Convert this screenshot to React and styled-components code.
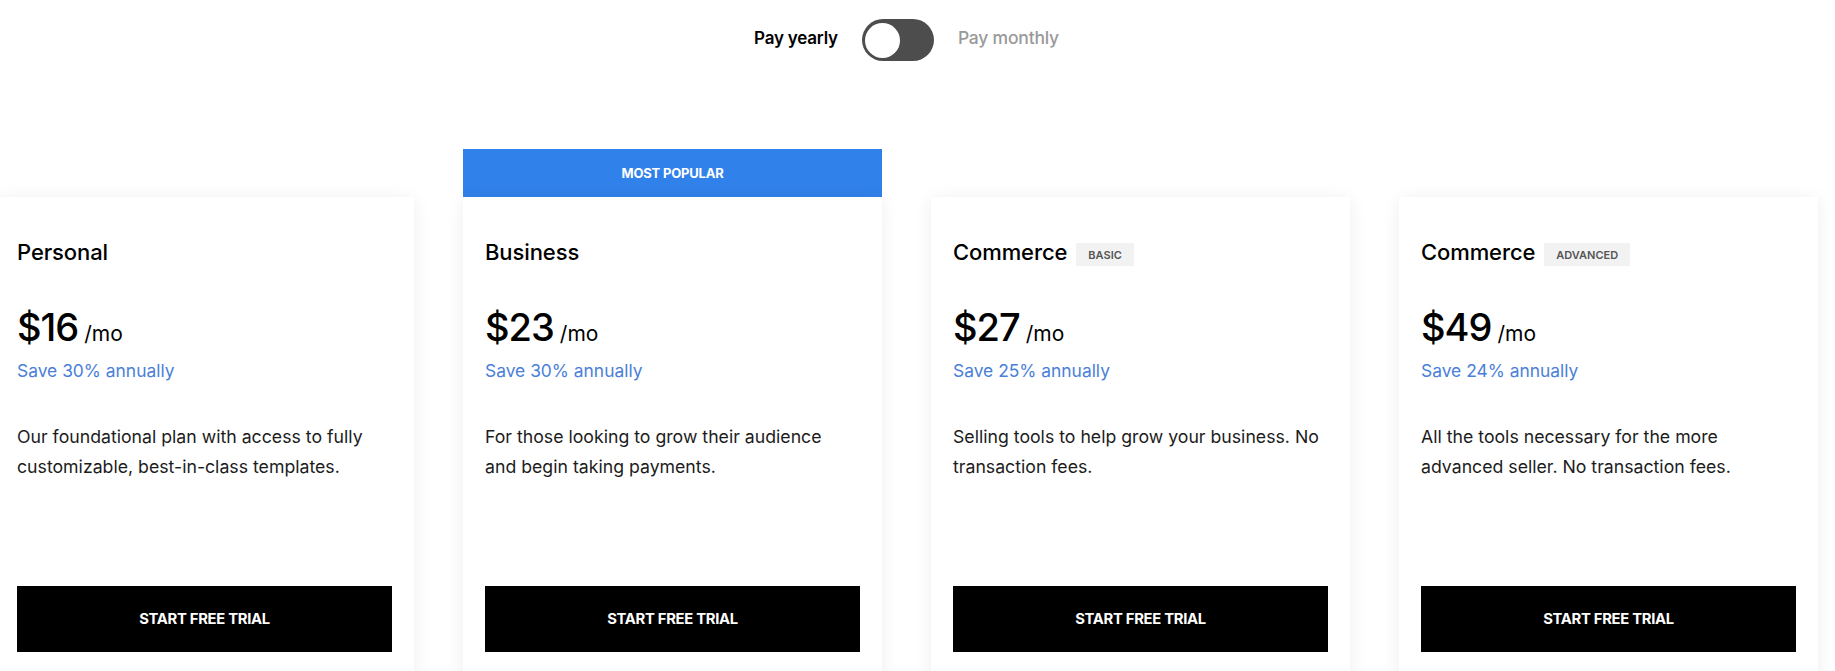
import React, { useState } from 'react';
import styled, { createGlobalStyle } from 'styled-components';

const GlobalStyle = createGlobalStyle`
  html, body {
    margin: 0;
    padding: 0;
    overflow: hidden;
    background: #fff;
  }
  body {
    font-family: Inter, "Liberation Sans", Arial, sans-serif;
    color: #000;
  }
  * { box-sizing: border-box; }
`;

const Page = styled.div`
  padding-top: 19px;
`;

const BillingSwitch = styled.div`
  display: flex;
  align-items: center;
  justify-content: center;
  gap: 24px;
  padding-right: 22px;
  height: 42px;
`;

const SwitchLabel = styled.span`
  font-size: ${p => (p.$active ? '17px' : '17.5px')};
  font-weight: ${p => (p.$active ? 600 : 500)};
  color: ${p => (p.$active ? '#000' : '#999')};
  cursor: pointer;
  letter-spacing: -0.2px;
  padding-bottom: 5px;
`;

const Track = styled.button`
  position: relative;
  width: 72px;
  height: 42px;
  border: none;
  border-radius: 21px;
  background: #4d4d4d;
  padding: 0;
  cursor: pointer;
`;

const Knob = styled.span`
  position: absolute;
  top: 3.5px;
  left: ${p => (p.$right ? '33.5px' : '3.5px')};
  width: 35px;
  height: 35px;
  border-radius: 50%;
  background: #fff;
  transition: left 0.2s;
`;

const Plans = styled.div`
  display: flex;
  gap: 49px;
  margin-top: 88px;
  margin-left: -5px;
  align-items: flex-start;
`;

const PlanColumn = styled.div`
  width: 419px;
  flex: none;
  display: flex;
  flex-direction: column;
`;

const Ribbon = styled.div`
  height: 48px;
  display: flex;
  align-items: center;
  justify-content: center;
  background: ${p => (p.$show ? '#3181ea' : 'transparent')};
  color: #fff;
  font-size: 13px;
  font-weight: 700;
  letter-spacing: -0.2px;
`;

const Card = styled.div`
  background: #fff;
  border-radius: ${p => (p.$popular ? '0 0 3px 3px' : '3px')};
  box-shadow: 0 2px 18px rgba(0, 0, 0, 0.07);
  padding: 41px 22px 40px;
`;

const TitleRow = styled.div`
  display: flex;
  align-items: center;
  gap: 9px;
  height: 28px;
`;

const Title = styled.h3`
  margin: 0;
  font-size: 22px;
  font-weight: 500;
  line-height: 28px;
  letter-spacing: -0.1px;
`;

const Tier = styled.span`
  height: 23px;
  padding: 0 12px;
  display: inline-flex;
  align-items: center;
  background: #f2f2f2;
  color: #555;
  font-size: 11px;
  font-weight: 600;
  margin-top: 5px;
`;

const PriceRow = styled.div`
  margin-top: 38px;
  display: flex;
  align-items: baseline;
  gap: 6px;
  height: 46px;
  line-height: 46px;
`;

const Amount = styled.span`
  font-size: 38px;
  font-weight: 500;
  letter-spacing: -1px;
`;

const Per = styled.span`
  font-size: 21px;
  font-weight: 400;
`;

const Savings = styled.div`
  margin-top: 9px;
  font-size: 17.4px;
  line-height: 24px;
  color: #4a80d8;
`;

const Blurb = styled.p`
  margin: 39px 0 0;
  font-size: 17.7px;
  line-height: 30px;
  color: #1c1c1c;
  height: 164px;
`;

const TrialButton = styled.button`
  display: flex;
  align-items: center;
  justify-content: center;
  width: 100%;
  height: 66px;
  border: none;
  background: #000;
  color: #fff;
  font-family: inherit;
  font-size: 14.8px;
  font-weight: 700;
  letter-spacing: -0.3px;
  cursor: pointer;
`;

const plans = [
  {
    name: 'Personal',
    price: 16,
    save: 'Save 30% annually',
    blurb: ['Our foundational plan with access to fully', 'customizable, best-in-class templates.'],
  },
  {
    name: 'Business',
    price: 23,
    save: 'Save 30% annually',
    blurb: ['For those looking to grow their audience', 'and begin taking payments.'],
    popular: true,
  },
  {
    name: 'Commerce',
    tier: 'BASIC',
    price: 27,
    save: 'Save 25% annually',
    blurb: ['Selling tools to help grow your business. No', 'transaction fees.'],
  },
  {
    name: 'Commerce',
    tier: 'ADVANCED',
    price: 49,
    save: 'Save 24% annually',
    blurb: ['All the tools necessary for the more', 'advanced seller. No transaction fees.'],
  },
];

const App = () => {
  const [monthly, setMonthly] = useState(false);

  return (
    <Page>
      <GlobalStyle />
      <BillingSwitch>
        <SwitchLabel $active={!monthly} onClick={() => setMonthly(false)}>Pay yearly</SwitchLabel>
        <Track aria-label="Toggle billing" onClick={() => setMonthly(!monthly)}>
          <Knob $right={monthly} />
        </Track>
        <SwitchLabel $active={monthly} onClick={() => setMonthly(true)}>Pay monthly</SwitchLabel>
      </BillingSwitch>

      <Plans>
        {plans.map((plan, i) => (
          <PlanColumn key={i}>
            <Ribbon $show={plan.popular}>{plan.popular ? 'MOST POPULAR' : null}</Ribbon>
            <Card $popular={plan.popular}>
              <TitleRow>
                <Title>{plan.name}</Title>
                {plan.tier && <Tier>{plan.tier}</Tier>}
              </TitleRow>
              <PriceRow>
                <Amount>${plan.price}</Amount>
                <Per>/mo</Per>
              </PriceRow>
              <Savings>{plan.save}</Savings>
              <Blurb>
                {plan.blurb[0]}
                <br />
                {plan.blurb[1]}
              </Blurb>
              <TrialButton>START FREE TRIAL</TrialButton>
            </Card>
          </PlanColumn>
        ))}
      </Plans>
    </Page>
  );
};

export default App;
